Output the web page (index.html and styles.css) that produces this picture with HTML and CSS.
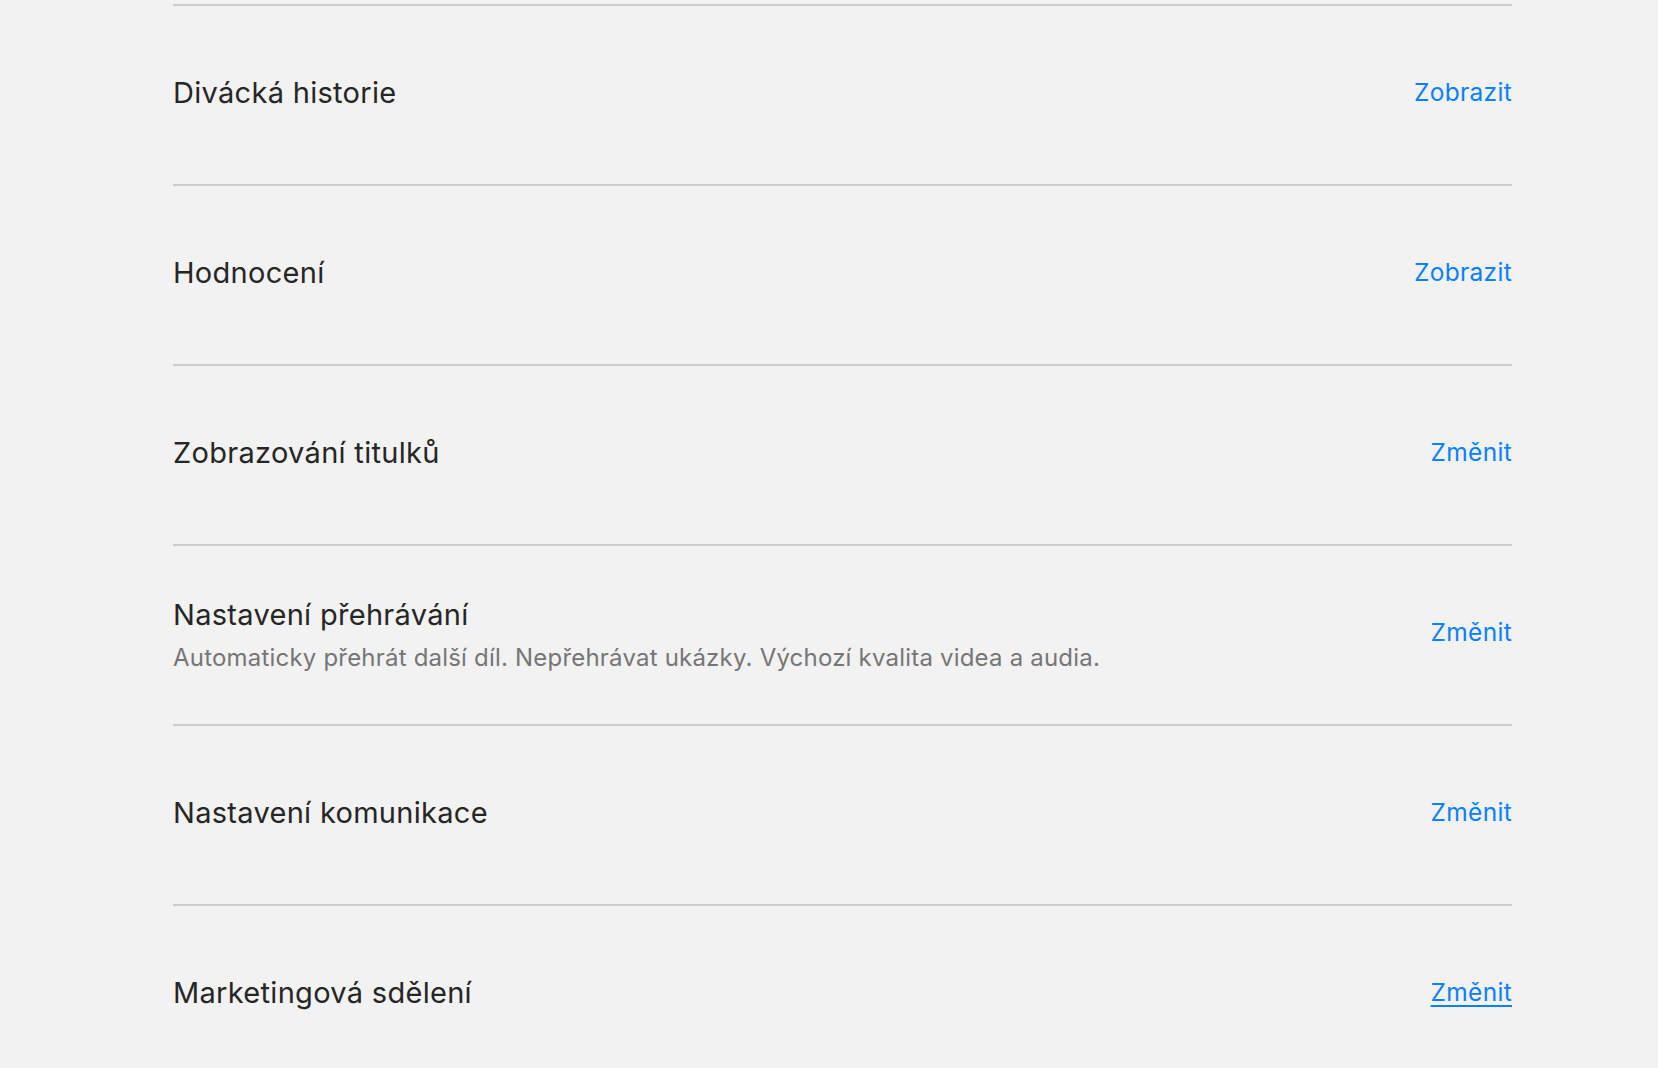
FILE: index.html
```html
<!DOCTYPE html>
<html>
<head>
    <link rel="stylesheet" href="styles.css">
</head>
<body>
    <div class="settings">
        <div class="row">
            <div class="row-text">
                <div class="row-title">Divácká historie</div>
            </div>
            <a class="row-link" href="#">Zobrazit</a>
        </div>
        <div class="row">
            <div class="row-text">
                <div class="row-title">Hodnocení</div>
            </div>
            <a class="row-link" href="#">Zobrazit</a>
        </div>
        <div class="row">
            <div class="row-text">
                <div class="row-title">Zobrazování titulků</div>
            </div>
            <a class="row-link" href="#">Změnit</a>
        </div>
        <div class="row">
            <div class="row-text with-desc">
                <div class="row-title">Nastavení přehrávání</div>
                <div class="row-desc">Automaticky přehrát další díl. Nepřehrávat ukázky. Výchozí kvalita videa a audia.</div>
            </div>
            <a class="row-link" href="#">Změnit</a>
        </div>
        <div class="row">
            <div class="row-text">
                <div class="row-title">Nastavení komunikace</div>
            </div>
            <a class="row-link" href="#">Změnit</a>
        </div>
        <div class="row">
            <div class="row-text">
                <div class="row-title">Marketingová sdělení</div>
            </div>
            <a class="row-link hover" href="#">Změnit</a>
        </div>
    </div>
</body>
</html>
```

FILE: styles.css
```css
html, body {
    margin: 0;
    padding: 0;
    background-color: #f2f2f2;
    font-family: Inter, "Noto Sans", sans-serif;
    overflow: hidden;
}
.settings {
    width: 1339px;
    margin: 4px 0 0 173px;
}
.row {
    display: flex;
    align-items: center;
    justify-content: space-between;
    height: 172px;
    padding-bottom: 6px;
    border-top: 2px solid #cccccc;
}
.row-text.with-desc {
    padding-top: 5px;
}
.row-title {
    font-size: 29px;
    letter-spacing: 0.3px;
    color: #262626;
}
.row-desc {
    margin-top: 11px;
    font-size: 24px;
    letter-spacing: 0.2px;
    color: #767676;
}
.row-link {
    font-size: 24.5px;
    letter-spacing: 0.3px;
    color: #0a80ff;
    text-decoration: none;
}
.row-link.hover {
    text-decoration: underline;
    text-underline-offset: 4px;
}
```
